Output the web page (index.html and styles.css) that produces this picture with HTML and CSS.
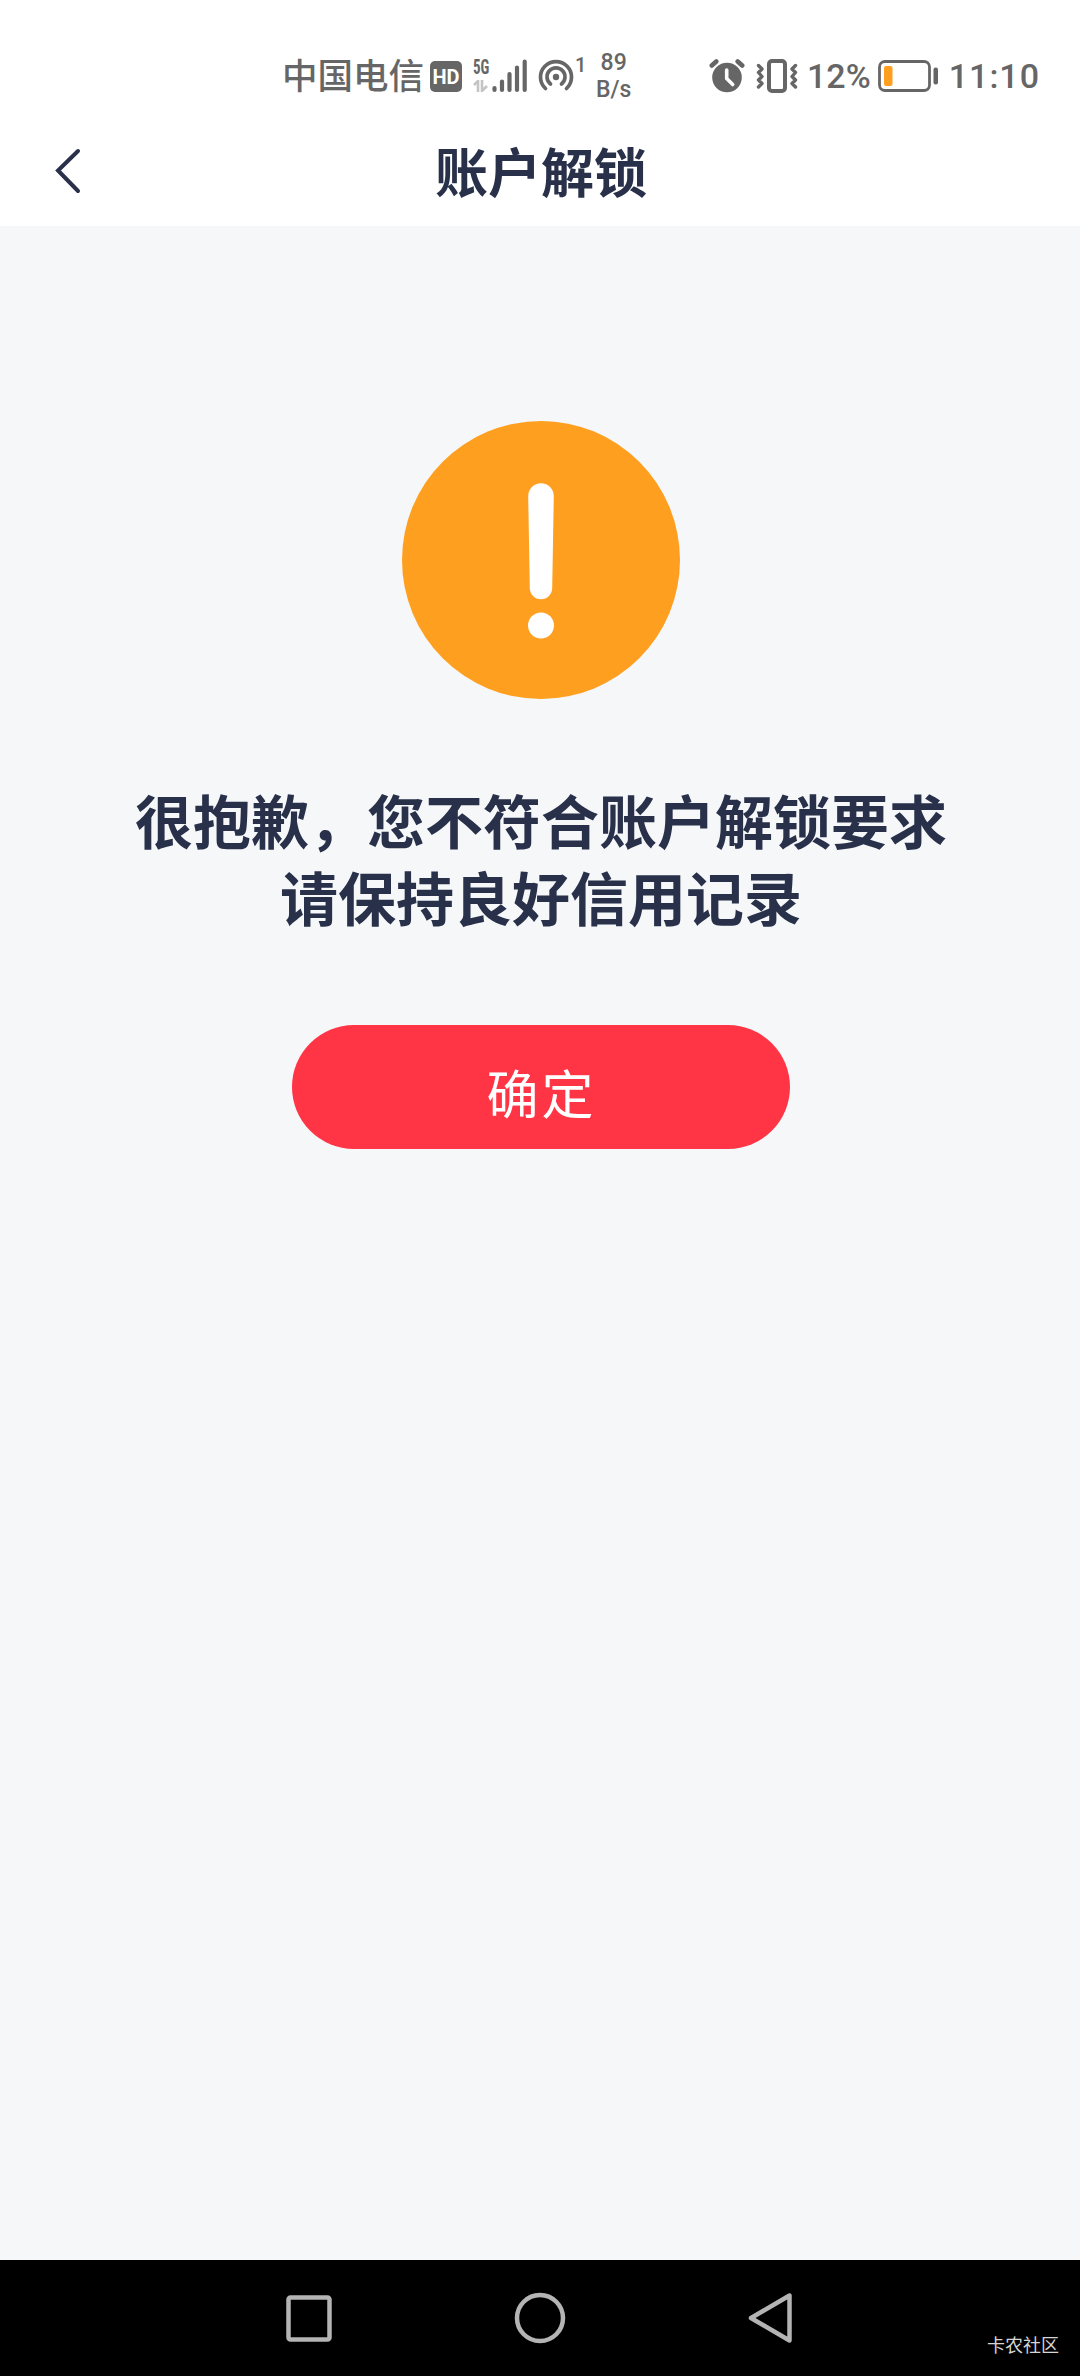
FILE: index.html
```html
<!DOCTYPE html>
<html lang="zh-CN">
<head>
    <meta charset="UTF-8">
    <meta name="viewport" content="width=device-width, initial-scale=1.0">
    <title>账户解锁</title>
    <link rel="stylesheet" href="styles.css">
</head>
<body>
    <div class="status-bar">
        <div class="status-left">
            <span class="carrier">中国电信</span>
            <span class="hd">HD</span>
            <div class="signal">
                <div class="network">
                    <span class="network-type">5G</span>
                    <svg width="16" height="12" viewBox="0 0 16 12">
                        <path d="M1 5l4-4v11M9 0v11l5-5" fill="none" stroke="#c4c4c4" stroke-width="2.6"/>
                    </svg>
                </div>
                <svg class="bars" width="36" height="34" viewBox="0 0 36 34">
                    <path d="M2.5 29v2M10 22.5v8.5M17.500 15v16M25 8.500v22.500M32.700 2.500v28.500" stroke="#666" stroke-width="4.200" stroke-linecap="round"/>
                </svg>
            </div>
            <svg class="hotspot" width="36" height="34" viewBox="0 0 36 34">
                <g fill="none" stroke="#666" stroke-width="3.700" stroke-linecap="round">
                    <path d="M7.500 29.500A15.500 15.500 0 1 1 28.500 29.500"/>
                    <path d="M12.500 25A9 9 0 1 1 23.500 25"/>
                </g>
                <circle cx="18" cy="18" r="3.200" fill="#666"/>
            </svg>
            <span class="hotspot-count">1</span>
            <div class="speed">
                <span>89</span>
                <span>B/s</span>
            </div>
        </div>
        <div class="status-right">
            <svg class="alarm" width="36" height="34" viewBox="0 0 36 34">
                <circle cx="18" cy="18.500" r="14.800" fill="#666"/>
                <path d="M2.800 6.500l4.500-4M33.200 6.500l-4.500-4" stroke="#666" stroke-width="4.600" stroke-linecap="round"/>
                <path d="M17.700 11v8.500l6 6" fill="none" stroke="#fff" stroke-width="3.600" stroke-linecap="round" stroke-linejoin="round"/>
            </svg>
            <svg class="vibrate" width="42" height="34" viewBox="0 0 42 34">
                <rect x="13" y="2" width="16" height="30" rx="3" fill="none" stroke="#666" stroke-width="4"/>
                <path d="M2.500 6.500l3.500 3.500-3.500 3.500 3.500 4-3.500 3.500 3.500 3.500-3.500 3.500M39.500 6.500l-3.500 3.500 3.500 3.500-3.500 4 3.500 3.500-3.500 3.500 3.500 3.500" fill="none" stroke="#666" stroke-width="3.400" stroke-linecap="round" stroke-linejoin="round"/>
            </svg>
            <span class="percent">12%</span>
            <svg class="battery" width="61" height="32" viewBox="0 0 61 32">
                <rect x="1.500" y="1.500" width="50" height="29" rx="5.500" fill="none" stroke="#666" stroke-width="2.800"/>
                <rect x="6" y="6" width="8.500" height="20" rx="2" fill="#fe9f20"/>
                <rect x="55.500" y="7.500" width="4.500" height="17" rx="2" fill="#666"/>
            </svg>
            <span class="time">11:10</span>
        </div>
    </div>

    <div class="header">
        <svg class="back" width="28" height="48" viewBox="0 0 28 48">
            <path d="M24 4L4 23.500 24 44" fill="none" stroke="#28304a" stroke-width="4" stroke-linecap="round"/>
        </svg>
        <h1>账户解锁</h1>
    </div>

    <div class="content">
        <svg class="warning" width="278" height="278" viewBox="0 0 278 278">
            <circle cx="139" cy="139" r="139" fill="#fe9f20"/>
            <path d="M126.200 75a12.800 12.800 0 0 1 25.600 0l-1.600 92a11.200 11.200 0 0 1-22.400 0z" fill="#fff"/>
            <circle cx="139" cy="204.500" r="13" fill="#fff"/>
        </svg>
        <p class="message">很抱歉，您不符合账户解锁要求<br>请保持良好信用记录</p>
        <button class="button">确定</button>
    </div>

    <div class="nav-bar">
        <svg width="52" height="52" viewBox="0 0 52 52">
            <rect x="5.500" y="5.500" width="41" height="42" rx="2" />
        </svg>
        <svg width="52" height="52" viewBox="0 0 52 52">
            <circle cx="26" cy="26" r="23"/>
        </svg>
        <svg width="52" height="52" viewBox="0 0 52 52">
            <path d="M6 26L44.500 3.500v45z"/>
        </svg>
        <span class="community">卡农社区</span>
    </div>
</body>
</html>
```

FILE: styles.css
```css
body, html {
    height: 100%;
    margin: 0;
    font-family: Roboto, "Noto Sans CJK SC", sans-serif;
}

body {
    display: flex;
    flex-direction: column;
    background-color: #f5f7f9;
    color: #28304a;
}

svg {
    display: block;
    flex-shrink: 0;
}

/* Status bar */
.status-bar {
    height: 126px;
    box-sizing: border-box;
    padding: 48px 40px 0 282px;
    display: flex;
    justify-content: space-between;
    background-color: #fff;
    color: #666;
}

.status-left, .status-right {
    display: flex;
    align-items: center;
    height: 56px;
}

.carrier {
    font-size: 35.500px;
    line-height: 56px;
    font-weight: 500;
    white-space: nowrap;
    padding-top: 2px;
}

.hd {
    width: 32px;
    height: 31px;
    margin-left: 6px;
    border-radius: 5px;
    background-color: #666;
    color: #fff;
    font-size: 20px;
    line-height: 32px;
    font-weight: 700;
    text-align: center;
}

.signal {
    display: flex;
    margin-left: 11px;
}

.network {
    width: 19px;
    height: 34px;
}

.network-type {
    display: block;
    height: 21px;
    font-family: "Roboto Condensed", Roboto, sans-serif;
    font-size: 20px;
    line-height: 17px;
    font-weight: 700;
    transform: scaleX(0.75);
    transform-origin: left;
}

.hotspot {
    margin-left: 10px;
}

.hotspot-count {
    width: 11px;
    margin: 0 10px 22px 1px;
    font-size: 20px;
    line-height: 20px;
    font-weight: 500;
}

.speed {
    display: flex;
    flex-direction: column;
    align-items: center;
    font-size: 23px;
    line-height: 27px;
    font-weight: 500;
}

.vibrate {
    margin-left: 11px;
}

.percent {
    margin-left: 9px;
    font-size: 34px;
    font-weight: 500;
}

.battery {
    margin-left: 7px;
}

.time {
    margin-left: 10px;
    font-size: 34px;
    font-weight: 500;
    letter-spacing: 1px;
}

/* Page header */
.header {
    height: 100px;
    display: grid;
    grid-template-columns: 108px 1fr 106px;
    align-items: center;
    background-color: #fff;
}

.back {
    margin: -10px 0 0 54px;
}

.header h1 {
    margin: -2px 0 0;
    font-size: 53px;
    line-height: 76px;
    font-weight: 700;
    text-align: center;
}

/* Result */
.content {
    flex: 1;
    display: flex;
    flex-direction: column;
    align-items: center;
    padding: 195px 0 0 2px;
}

.message {
    margin: 87px 0 0;
    font-size: 58px;
    line-height: 77px;
    font-weight: 700;
    text-align: center;
    white-space: nowrap;
}

.button {
    width: 498px;
    height: 124px;
    margin-top: 85px;
    padding: 8px 0 0 1px;
    border: none;
    border-radius: 62px;
    background-color: #ff3445;
    color: #fff;
    font-family: inherit;
    font-size: 52px;
    letter-spacing: 3px;
    cursor: pointer;
}

/* System navigation */
.nav-bar {
    position: relative;
    height: 116px;
    display: flex;
    justify-content: center;
    align-items: center;
    gap: 179px;
    background-color: #000;
}

.nav-bar svg {
    fill: none;
    stroke: #b4b4b4;
    stroke-width: 4.500px;
    stroke-linejoin: round;
}

.community {
    position: absolute;
    right: 21px;
    bottom: 17px;
    color: #d5d5d5;
    font-size: 18px;
    line-height: 26px;
}
```
